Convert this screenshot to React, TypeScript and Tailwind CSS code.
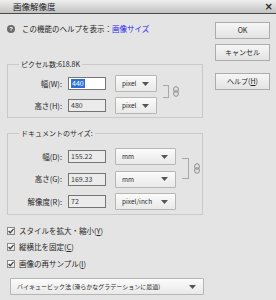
import React from "react";

const font = "font-['Noto_Sans_CJK_JP','Noto_Sans',sans-serif]";

function LinkIcon() {
  return (
    <svg width="6" height="11" viewBox="0 0 6 11" fill="none">
      <rect x="0.7" y="0.7" width="4.6" height="5.6" rx="2.3" stroke="#8c8c8c" strokeWidth="1" />
      <rect x="0.7" y="4.7" width="4.6" height="5.6" rx="2.3" stroke="#8c8c8c" strokeWidth="1" />
    </svg>
  );
}

function Arrow() {
  return (
    <svg width="7" height="4" viewBox="0 0 7 4">
      <path d="M0 0 H7 L3.5 4 Z" fill="#555555" />
    </svg>
  );
}

function Select({ value, w, small }: { value: string; w: string; small?: boolean }) {
  return (
    <div
      className={`${w} h-[17px] flex items-center justify-between pl-[6px] pr-[7px] border border-[#b6b6b6] rounded-[1px] bg-gradient-to-b from-[#fbfbfb] to-[#e9e9e9] ${
        small ? "text-[6px]" : "text-[6.5px]"
      }`}
    >
      <span className="leading-none whitespace-nowrap">{value}</span>
      <Arrow />
    </div>
  );
}

function Field({
  label,
  value,
  unit,
  selectW,
  selected,
}: {
  label: string;
  value: string;
  unit: string;
  selectW: string;
  selected?: boolean;
}) {
  return (
    <div className="h-[17px] flex items-center">
      <span className="w-[54px] text-right leading-none whitespace-nowrap">{label}</span>
      <div
        className={`ml-[6px] w-[38px] h-[13px] flex items-center pl-[2px] border border-[#757575] text-[7px] ${
          selected ? "bg-white" : "bg-[#ebebeb]"
        }`}
      >
        {selected ? (
          <span className="bg-[#2f6fd6] text-white leading-[9px] px-[1px]">{value}</span>
        ) : (
          <span className="leading-none text-[#3a3a3a]">{value}</span>
        )}
      </div>
      <div className="ml-[9px]">
        <Select value={unit} w={selectW} />
      </div>
    </div>
  );
}

function Check({ label, hotkey }: { label: string; hotkey: string }) {
  return (
    <div className="h-[9px] flex items-center">
      <div className="w-[8px] h-[8px] border border-[#8a8a8a] bg-gradient-to-b from-[#ffffff] to-[#e4e4e4] flex items-center justify-center">
        <svg width="6" height="6" viewBox="0 0 6 6">
          <path d="M0.6 3 L2.3 4.8 L5.5 0.8" stroke="#404040" strokeWidth="1.3" fill="none" />
        </svg>
      </div>
      <span className="ml-[4px] leading-none whitespace-nowrap">
        {label}(<span className="underline">{hotkey}</span>)
      </span>
    </div>
  );
}

function Button({ children }: { children: React.ReactNode }) {
  return (
    <div className="h-[17px] flex items-center justify-center border border-[#acacac] bg-gradient-to-b from-[#f6f6f6] to-[#e3e3e3] text-[7px] leading-none">
      {children}
    </div>
  );
}

export default function App() {
  return (
    <div className={`w-[276px] h-[300px] overflow-hidden bg-[#e4e4e4] text-[7.5px] text-[#262626] ${font}`}>
      <div className="h-[14px] flex items-center justify-between pl-[13px] pr-[3px] border-b border-[#4a4a4a] bg-gradient-to-b from-[#efefef] to-[#c2c2c2]">
        <span className="text-[8.5px] leading-none text-[#222]">画像解像度</span>
        <span className="text-[10px] font-bold leading-none font-['DejaVu_Sans',sans-serif]">×</span>
      </div>

      <div className="flex">
        <div className="ml-[7px] w-[198px] flex flex-col">
          <div className="mt-[10px] h-[9px] flex items-center">
            <div className="w-[8px] h-[8px] rounded-full bg-[#6b6b6b] flex items-center justify-center text-white text-[6px] font-bold leading-none font-['Liberation_Sans',sans-serif]">
              ?
            </div>
            <span className="ml-[7px] leading-none whitespace-nowrap">
              この機能のヘルプを表示：<span className="text-[#2a2af0]">画像サイズ</span>
            </span>
          </div>

          <div className="relative mt-[31px] w-[196px] border border-[#c9c9c9] pt-[10px] pb-[3px] flex flex-col gap-[5px]">
            <span className="absolute -top-[5px] left-[11px] px-[2px] bg-[#e4e4e4] leading-[9px] text-[7px] whitespace-nowrap">
              ピクセル数:618.8K
            </span>
            <Field label="幅(W):" value="440" unit="pixel" selectW="w-[42px]" selected />
            <Field label="高さ(H):" value="480" unit="pixel" selectW="w-[42px]" />
            <div className="absolute left-[155px] top-[20px] w-[6px] h-[13px] border-t border-r border-b border-[#a8a8a8]" />
            <div className="absolute left-[165px] top-[21px]">
              <LinkIcon />
            </div>
          </div>

          <div className="relative mt-[15px] w-[196px] border border-[#c9c9c9] pt-[14px] pb-[4px] flex flex-col gap-[5.5px]">
            <span className="absolute -top-[5px] left-[11px] px-[2px] bg-[#e4e4e4] leading-[9px] text-[7px] whitespace-nowrap">
              ドキュメントのサイズ:
            </span>
            <Field label="幅(D):" value="155.22" unit="mm" selectW="w-[61px]" />
            <Field label="高さ(G):" value="169.33" unit="mm" selectW="w-[61px]" />
            <Field label="解像度(R):" value="72" unit="pixel/inch" selectW="w-[61px]" />
            <div className="absolute left-[174px] top-[24px] w-[7px] h-[21px] border-t border-r border-b border-[#a8a8a8]" />
            <div className="absolute left-[186px] top-[29px]">
              <LinkIcon />
            </div>
          </div>

          <div className="mt-[11px] flex flex-col gap-[7.5px]">
            <Check label="スタイルを拡大・縮小" hotkey="Y" />
            <Check label="縦横比を固定" hotkey="C" />
            <Check label="画像の再サンプル" hotkey="I" />
          </div>

          <div className="mt-[10px] ml-[3px]">
            <Select value="バイキュービック法 (滑らかなグラデーションに最適)" w="w-[194px]" small />
          </div>
        </div>

        <div className="ml-auto mr-[6px] w-[55px] pt-[8px] flex flex-col">
          <Button>OK</Button>
          <div className="mt-[5px]">
            <Button>キャンセル</Button>
          </div>
          <div className="mt-[12px]">
            <Button>
              ヘルプ(<span className="underline">H</span>)
            </Button>
          </div>
        </div>
      </div>
    </div>
  );
}
